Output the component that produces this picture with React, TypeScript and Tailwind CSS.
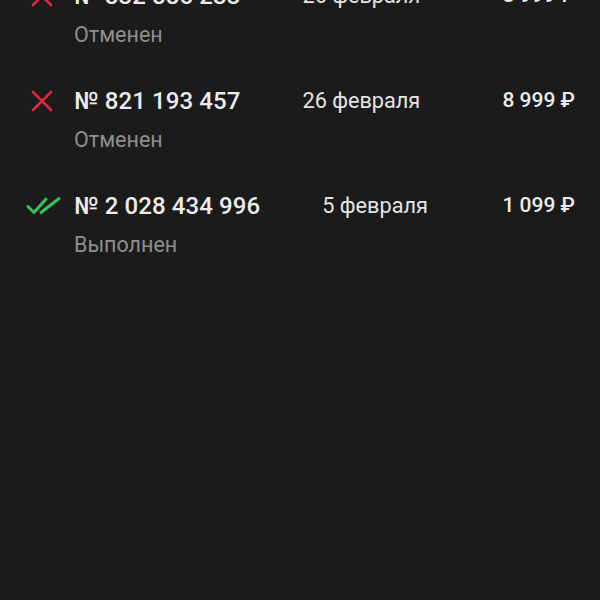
import { ReactNode } from "react";

type Order = {
  id: string;
  date: string;
  price: string;
  status: "cancelled" | "done";
};

const orders: Order[] = [
  { id: "№ 832 885 233", date: "26 февраля", price: "8 999 ₽", status: "cancelled" },
  { id: "№ 821 193 457", date: "26 февраля", price: "8 999 ₽", status: "cancelled" },
  { id: "№ 2 028 434 996", date: "5 февраля", price: "1 099 ₽", status: "done" },
];

function CrossIcon() {
  return (
    <svg width="22" height="22" viewBox="0 0 22 22" fill="none">
      <path d="M2 2L20 20M20 2L2 20" stroke="#e3243f" strokeWidth="2.6" strokeLinecap="round" />
    </svg>
  );
}

function DoubleCheckIcon() {
  return (
    <svg width="36" height="20" viewBox="0 0 36 20" fill="none">
      {/* two overlapping ticks */}
      <path d="M2 10.5L8 16.5L20 3" stroke="#2fc45c" strokeWidth="3" strokeLinecap="round" strokeLinejoin="round" />
      <path d="M15 16.5L33 2.5" stroke="#2fc45c" strokeWidth="3" strokeLinecap="round" />
    </svg>
  );
}

function Row({ order }: { order: Order }) {
  let icon: ReactNode = <CrossIcon />;
  if (order.status === "done") icon = <DoubleCheckIcon />;

  return (
    <li className="pt-[20px] pb-[16px] pl-[24px] pr-[25px]">
      <div className="flex items-center h-[32px]">
        <div className="w-[36px] mr-[14px] flex justify-center">
          <div className={order.status === "done" ? "ml-[3px]" : ""}>{icon}</div>
        </div>
        <span className="text-[24px] font-medium text-[#ececec] tracking-[0.1px]">{order.id}</span>
        <span className="ml-[62px] text-[21.7px] text-[#e4e4e4]">{order.date}</span>
        <span className="ml-auto text-[21px] font-medium text-[#ececec]">{order.price}</span>
      </div>
      <div className="mt-[9px] h-[28px] pl-[50px] flex items-center text-[21.5px] text-[#8e8e8e]">
        {order.status === "done" ? "Выполнен" : "Отменен"}
      </div>
    </li>
  );
}

export default function App() {
  return (
    <div
      className="w-full h-[600px] overflow-hidden bg-[#1b1b1b]"
      style={{ fontFamily: "Roboto, 'Noto Sans', sans-serif" }}
    >
      <ul className="-mt-[40px]">
        {orders.map((o) => (
          <Row key={o.id} order={o} />
        ))}
      </ul>
    </div>
  );
}
